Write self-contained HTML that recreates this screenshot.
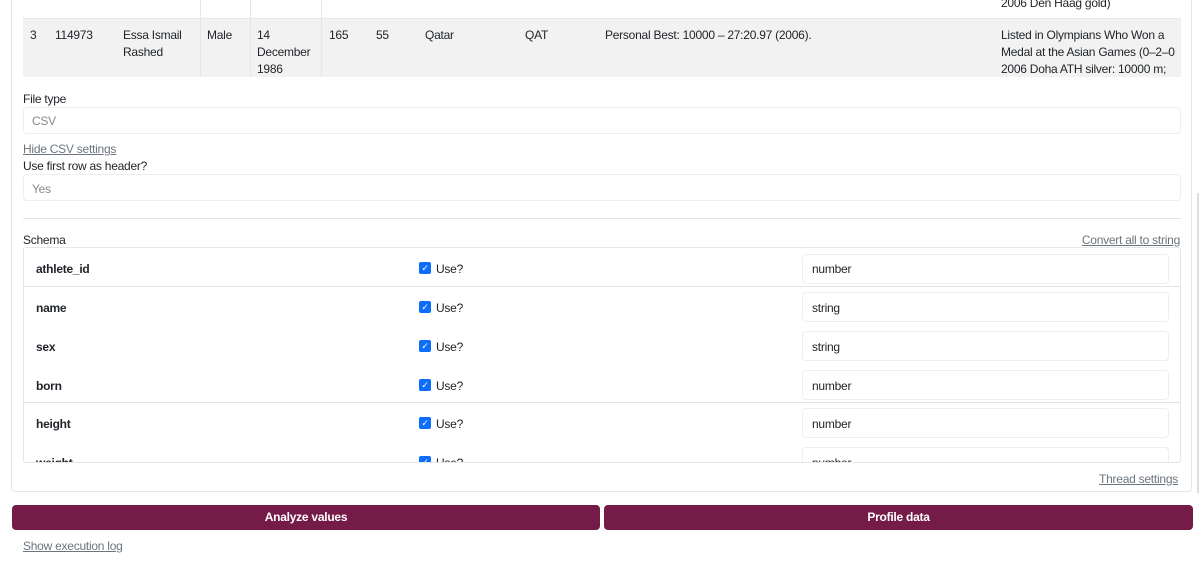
<!DOCTYPE html>
<html><head><style>
*{box-sizing:border-box;margin:0;padding:0}
body{width:1200px;height:573px;overflow:hidden;background:#fff;font-family:"Liberation Sans",sans-serif;font-size:12px;letter-spacing:-0.25px;color:#212529;position:relative}
.a{position:absolute}
.card{left:11px;top:-10px;width:1181px;height:502px;border:1px solid #e6e6e6;border-radius:4px}
.t{white-space:nowrap;line-height:17px;margin-top:1px}
.inp{border:1px solid #eeeeee;border-radius:4px;background:#fff}
.lnk{color:#6c757d;text-decoration:underline}
.cb{width:12px;height:12px;background:#0d6efd;border-radius:2px;color:#fff;font-size:9px;line-height:12px;text-align:center}
.btn{background:#741b47;color:#fff;font-weight:bold;text-align:center;border-radius:4px;height:25px;line-height:25px;top:505px}
b{font-weight:bold}
</style></head><body>
<div class="a card"></div>
<div class="a" style="left:23px;top:0;width:1158px;height:19px;border-bottom:1px solid #e8e8e8"></div>
<div class="a" style="left:23px;top:19px;width:1158px;height:58px;background:#f2f2f2"></div>
<div class="a" style="left:200px;top:0;width:1px;height:77px;background:#e6e6e6"></div>
<div class="a" style="left:250px;top:0;width:1px;height:77px;background:#e6e6e6"></div>
<div class="a" style="left:321px;top:0;width:1px;height:77px;background:#e6e6e6"></div>
<div class="a t" style="left:1001px;top:-6px">2006 Den Haag gold)</div>
<div class="a t" style="left:30px;top:26px">3</div>
<div class="a t" style="left:55px;top:26px">114973</div>
<div class="a t" style="left:123px;top:26px">Essa Ismail<br>Rashed</div>
<div class="a t" style="left:207px;top:26px">Male</div>
<div class="a t" style="left:257px;top:26px">14<br>December<br>1986</div>
<div class="a t" style="left:329px;top:26px">165</div>
<div class="a t" style="left:376px;top:26px">55</div>
<div class="a t" style="left:425px;top:26px">Qatar</div>
<div class="a t" style="left:525px;top:26px">QAT</div>
<div class="a t" style="left:605px;top:26px">Personal Best: 10000 – 27:20.97 (2006).</div>
<div class="a t" style="left:1001px;top:26px;overflow:hidden;width:174px">Listed in Olympians Who Won a<br>Medal at the Asian Games (0–2–0<br>2006 Doha ATH silver: 10000 m;</div>
<div class="a t" style="left:23px;top:90px">File type</div>
<div class="a inp" style="left:23px;top:107px;width:1158px;height:27px"></div>
<div class="a t" style="left:32px;top:112px;color:#888">CSV</div>
<div class="a t lnk" style="left:23px;top:140px">Hide CSV settings</div>
<div class="a t" style="left:23px;top:157px">Use first row as header?</div>
<div class="a inp" style="left:23px;top:174px;width:1158px;height:27px"></div>
<div class="a t" style="left:32px;top:180px;color:#888">Yes</div>
<div class="a" style="left:23px;top:218px;width:1158px;height:1px;background:#e3e3e3"></div>
<div class="a t" style="left:23px;top:231px">Schema</div>
<div class="a t lnk" style="right:20px;top:231px">Convert all to string</div>
<div class="a" style="left:23px;top:247px;width:1158px;height:216px;border:1px solid #e6e6e6;border-radius:3px;overflow:hidden">
<div style="position:relative">
<div class="a" style="left:0;top:38px;width:1158px;height:1px;background:#e3e3e3"></div>
<div class="a" style="left:0;top:154px;width:1158px;height:1px;background:#e3e3e3"></div>
<div class="a t" style="left:12px;top:12px"><b>athlete_id</b></div>
<div class="a t" style="left:12px;top:51px"><b>name</b></div>
<div class="a t" style="left:12px;top:90px"><b>sex</b></div>
<div class="a t" style="left:12px;top:129px"><b>born</b></div>
<div class="a t" style="left:12px;top:167px"><b>height</b></div>
<div class="a t" style="left:12px;top:206px"><b>weight</b></div>
<div class="a cb" style="left:395px;top:14px">✓</div><div class="a t" style="left:412px;top:12px">Use?</div>
<div class="a cb" style="left:395px;top:53px">✓</div><div class="a t" style="left:412px;top:51px">Use?</div>
<div class="a cb" style="left:395px;top:92px">✓</div><div class="a t" style="left:412px;top:90px">Use?</div>
<div class="a cb" style="left:395px;top:131px">✓</div><div class="a t" style="left:412px;top:129px">Use?</div>
<div class="a cb" style="left:395px;top:169px">✓</div><div class="a t" style="left:412px;top:167px">Use?</div>
<div class="a cb" style="left:395px;top:208px">✓</div><div class="a t" style="left:412px;top:206px">Use?</div>
<div class="a inp" style="left:778px;top:6px;width:367px;height:30px"></div><div class="a t" style="left:788px;top:12px">number</div>
<div class="a inp" style="left:778px;top:44px;width:367px;height:30px"></div><div class="a t" style="left:788px;top:51px">string</div>
<div class="a inp" style="left:778px;top:83px;width:367px;height:30px"></div><div class="a t" style="left:788px;top:90px">string</div>
<div class="a inp" style="left:778px;top:122px;width:367px;height:30px"></div><div class="a t" style="left:788px;top:129px">number</div>
<div class="a inp" style="left:778px;top:160px;width:367px;height:30px"></div><div class="a t" style="left:788px;top:167px">number</div>
<div class="a inp" style="left:778px;top:199px;width:367px;height:30px"></div><div class="a t" style="left:788px;top:206px">number</div>
</div></div>
<div class="a t lnk" style="right:22px;top:470px">Thread settings</div>
<div class="a btn" style="left:12px;width:588px">Analyze values</div>
<div class="a btn" style="left:604px;width:589px">Profile data</div>
<div class="a t lnk" style="left:23px;top:537px">Show execution log</div>
<div class="a" style="left:1197px;top:193px;width:2px;height:300px;background:#ddd"></div>
</body></html>
